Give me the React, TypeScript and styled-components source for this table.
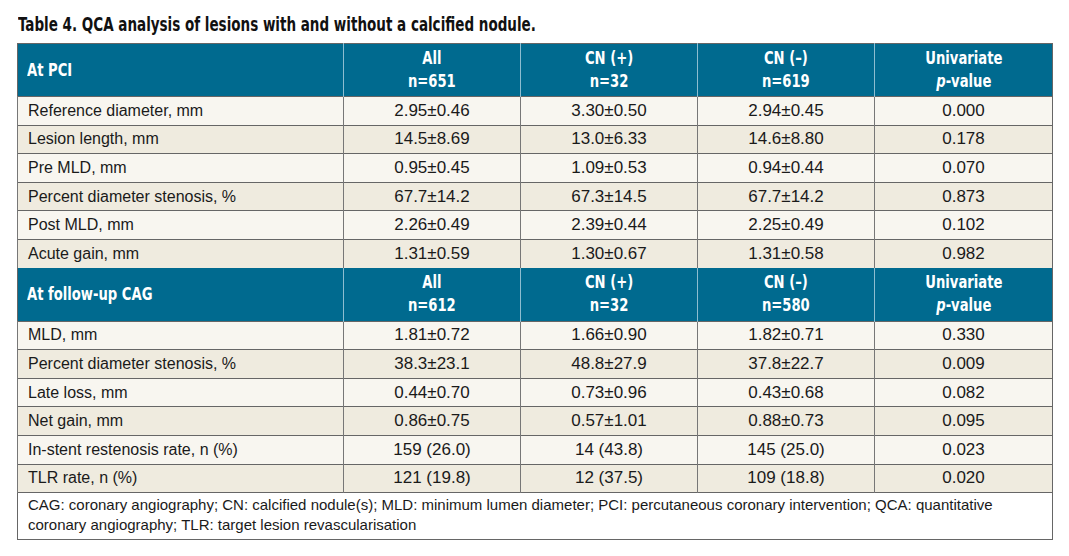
import styled, { createGlobalStyle } from 'styled-components'

const GlobalStyle = createGlobalStyle`
  body {
    margin: 0;
    background: #fff;
  }
`

const Page = styled.div`
  padding: 13px 17px 0 17px;
  width: 1035px;
`

// the source uses a bold condensed face; DejaVu Condensed squeezed a bit further
const Condensed = styled.span<{ $origin?: string; $scale?: number }>`
  display: inline-block;
  white-space: nowrap;
  transform: scaleX(${p => p.$scale ?? 0.86});
  transform-origin: ${p => p.$origin ?? 'center'};
`

const Title = styled.h1`
  margin: 0 0 7px 1px;
  font-family: "DejaVu Sans Condensed", "Liberation Sans", sans-serif;
  font-weight: bold;
  font-size: 19px;
  line-height: 23px;
  color: #111;
`

const Table = styled.table`
  width: 1035px;
  border-collapse: collapse;
  table-layout: fixed;
  border: 1px solid #666;
  font-family: "Liberation Sans", Arial, sans-serif;
  font-size: 16px;
  color: #1a1a1a;
`

const HeadRow = styled.tr`
  height: 53px;
  background: #006a8f;
`

const HeadCell = styled.th<{ $left?: boolean }>`
  padding: 0 0 0 ${p => (p.$left ? '9px' : '0')};
  text-align: ${p => (p.$left ? 'left' : 'center')};
  font-family: "DejaVu Sans Condensed", "Liberation Sans", sans-serif;
  font-weight: bold;
  font-size: 17px;
  line-height: 23px;
  color: #fff;
  border-left: 1px solid #8dbdd0;
  &:first-child {
    border-left: none;
  }
`

const BodyRow = styled.tr<{ $shade: boolean }>`
  height: 28.6px;
  background: ${p => (p.$shade ? '#efebdf' : '#f8f6f0')};
  border-top: 1px solid #666;
`

const Cell = styled.td`
  padding: 0;
  text-align: center;
  font-size: 17px;
  line-height: 20px;
  border-left: 1px solid #777;
  &:first-child {
    text-align: left;
    padding-left: 10px;
    font-size: 16px;
  }
`

const NoteRow = styled.tr`
  border-top: 1px solid #666;
  background: #fff;
`

const Note = styled.td`
  padding: 2px 10px 4px 10px;
  font-size: 15px;
  line-height: 20px;
  height: 38px;
`

type Row = [string, string, string, string, string]

const pciRows: Row[] = [
  ['Reference diameter, mm', '2.95±0.46', '3.30±0.50', '2.94±0.45', '0.000'],
  ['Lesion length, mm', '14.5±8.69', '13.0±6.33', '14.6±8.80', '0.178'],
  ['Pre MLD, mm', '0.95±0.45', '1.09±0.53', '0.94±0.44', '0.070'],
  ['Percent diameter stenosis, %', '67.7±14.2', '67.3±14.5', '67.7±14.2', '0.873'],
  ['Post MLD, mm', '2.26±0.49', '2.39±0.44', '2.25±0.49', '0.102'],
  ['Acute gain, mm', '1.31±0.59', '1.30±0.67', '1.31±0.58', '0.982'],
]

const cagRows: Row[] = [
  ['MLD, mm', '1.81±0.72', '1.66±0.90', '1.82±0.71', '0.330'],
  ['Percent diameter stenosis, %', '38.3±23.1', '48.8±27.9', '37.8±22.7', '0.009'],
  ['Late loss, mm', '0.44±0.70', '0.73±0.96', '0.43±0.68', '0.082'],
  ['Net gain, mm', '0.86±0.75', '0.57±1.01', '0.88±0.73', '0.095'],
  ['In-stent restenosis rate, n (%)', '159 (26.0)', '14 (43.8)', '145 (25.0)', '0.023'],
  ['TLR rate, n (%)', '121 (19.8)', '12 (37.5)', '109 (18.8)', '0.020'],
]

const Header = ({ label, counts }: { label: string; counts: [string, string, string] }) => (
  <HeadRow>
    <HeadCell $left><Condensed $origin="left">{label}</Condensed></HeadCell>
    <HeadCell><Condensed>All<br />n={counts[0]}</Condensed></HeadCell>
    <HeadCell><Condensed>CN (+)<br />n={counts[1]}</Condensed></HeadCell>
    <HeadCell><Condensed>CN (–)<br />n={counts[2]}</Condensed></HeadCell>
    <HeadCell><Condensed>Univariate<br /><i>p</i>-value</Condensed></HeadCell>
  </HeadRow>
)

const Rows = ({ rows }: { rows: Row[] }) => (
  <>
    {rows.map((r, i) => (
      <BodyRow key={r[0]} $shade={i % 2 === 1}>
        {r.map((c, j) => <Cell key={j}>{c}</Cell>)}
      </BodyRow>
    ))}
  </>
)

export default function App() {
  return (
    <Page>
      <GlobalStyle />
      <Title>
        <Condensed $origin="left" $scale={0.79}>
          Table 4. QCA analysis of lesions with and without a calcified nodule.
        </Condensed>
      </Title>
      <Table>
        <colgroup>
          <col style={{ width: 326 }} />
          <col style={{ width: 177 }} />
          <col style={{ width: 177 }} />
          <col style={{ width: 177 }} />
          <col style={{ width: 178 }} />
        </colgroup>
        <tbody>
          <Header label="At PCI" counts={['651', '32', '619']} />
          <Rows rows={pciRows} />
          <Header label="At follow-up CAG" counts={['612', '32', '580']} />
          <Rows rows={cagRows} />
          <NoteRow>
            <Note colSpan={5}>
              CAG: coronary angiography; CN: calcified nodule(s); MLD: minimum lumen diameter; PCI: percutaneous coronary intervention; QCA: quantitative coronary angiography; TLR: target lesion revascularisation
            </Note>
          </NoteRow>
        </tbody>
      </Table>
    </Page>
  )
}
